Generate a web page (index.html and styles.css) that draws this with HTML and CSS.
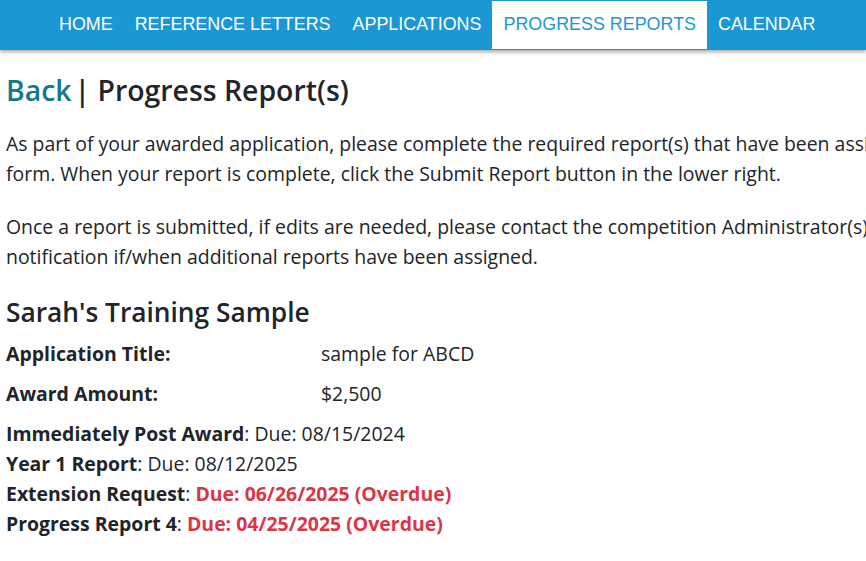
FILE: index.html
```html
<!DOCTYPE html>
<html>
<head>
<meta charset="utf-8">
<link rel="stylesheet" href="styles.css">
</head>
<body>
<nav class="topnav">
  <ul class="nav-list">
    <li><a class="nav-link" href="#">HOME</a></li>
    <li><a class="nav-link" href="#">REFERENCE LETTERS</a></li>
    <li><a class="nav-link" href="#">APPLICATIONS</a></li>
    <li><a class="nav-link active" href="#">PROGRESS REPORTS</a></li>
    <li><a class="nav-link" href="#">CALENDAR</a></li>
  </ul>
</nav>
<main class="content">
  <h2 class="page-title"><a class="back-link" href="#">Back</a><span class="sep">|</span> Progress Report(s)</h2>
  <p class="intro">As part of your awarded application, please complete the required report(s) that have been assigned to you by clicking on the report name to open the<br>form. When your report is complete, click the Submit Report button in the lower right.</p>
  <p class="intro">Once a report is submitted, if edits are needed, please contact the competition Administrator(s). You will receive an email<br>notification if/when additional reports have been assigned.</p>
  <h3 class="app-name">Sarah's Training Sample</h3>
  <div class="detail-row"><span class="label">Application Title:</span><span class="value">sample for ABCD</span></div>
  <div class="detail-row"><span class="label">Award Amount:</span><span class="value">$2,500</span></div>
  <ul class="report-list">
    <li><a class="report-name" href="#">Immediately Post Award</a>: Due: 08/15/2024</li>
    <li><a class="report-name" href="#">Year 1 Report</a>: Due: 08/12/2025</li>
    <li><a class="report-name" href="#">Extension Request</a>: <span class="overdue">Due: 06/26/2025 (Overdue)</span></li>
    <li><a class="report-name" href="#">Progress Report 4</a>: <span class="overdue">Due: 04/25/2025 (Overdue)</span></li>
  </ul>
</main>
</body>
</html>
```
FILE: styles.css
```css
html, body {
  margin: 0;
  padding: 0;
  overflow: hidden;
  background: #fff;
}
body {
  font-family: "Segoe UI", "Open Sans", sans-serif;
  color: #212529;
  font-size: 19.45px;
  line-height: 30px;
}
.topnav {
  background: #1b97d5;
  height: 50px;
  box-shadow: 0 2px 4px rgba(0,0,0,0.35);
  position: relative;
  z-index: 1;
}
.nav-list {
  list-style: none;
  margin: 0;
  padding: 1px 0 0 48px;
  display: flex;
}
.nav-link {
  display: block;
  height: 48px;
  line-height: 46px;
  padding: 0 11px;
  font-family: "Liberation Sans", Arial, sans-serif;
  font-size: 17.9px;
  color: #fff;
  text-decoration: none;
}
.nav-link.active {
  background: #fff;
  color: #1b97d5;
}
.content {
  padding: 0 0 0 6px;
  width: 1200px;
}
.page-title {
  margin: 21px 0 20px;
  font-size: 28.4px;
  font-weight: 600;
  line-height: 38px;
}
.back-link {
  color: #13788f;
  text-decoration: none;
}
.sep {
  margin-left: 3px;
}
.intro {
  margin: 0 0 23px;
  white-space: nowrap;
}
.app-name {
  margin: 0 0 10px;
  font-size: 26.3px;
  font-weight: 600;
  line-height: 34px;
}
.detail-row {
  display: grid;
  grid-template-columns: 315px auto;
  margin-bottom: 10px;
}
.label {
  font-weight: 700;
}
.report-list {
  list-style: none;
  margin: 3px 0 0;
  padding: 0;
}
.report-name {
  font-weight: 700;
  color: #212529;
  text-decoration: none;
}
.overdue {
  color: #dc3545;
  font-weight: 700;
}
```
